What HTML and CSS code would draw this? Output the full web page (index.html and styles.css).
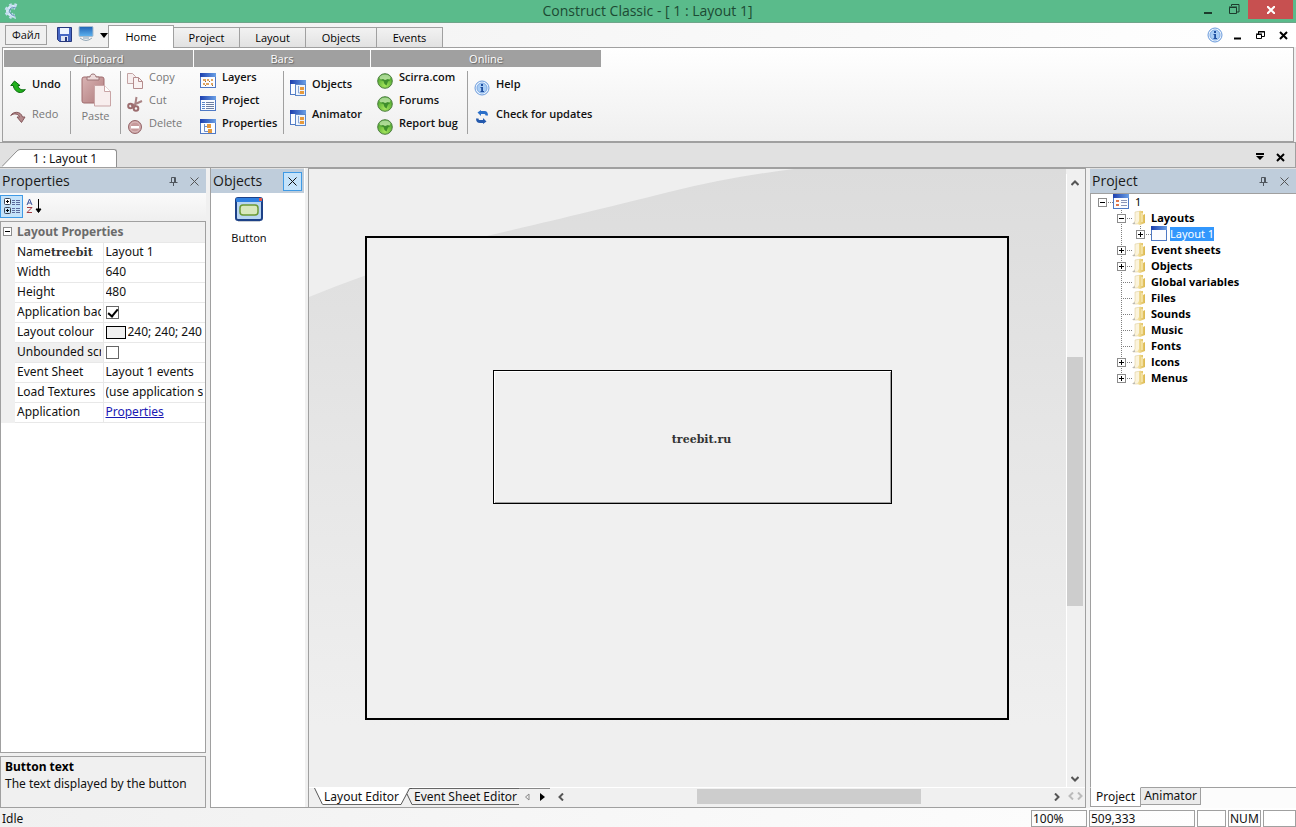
FILE: index.html
```html
<!DOCTYPE html>
<html lang="en">
<head>
    <meta charset="UTF-8">
    <meta name="viewport" content="width=device-width, initial-scale=1.0">
    <title>Construct Classic - [ 1 : Layout 1]</title>
    <link rel="stylesheet" href="styles.css">
</head>
<body>
    <svg class="defs" width="0" height="0" aria-hidden="true">
        <defs>
            <linearGradient id="gBlue" x1="0" y1="0" x2="1" y2="0">
                <stop offset="0" stop-color="#1c3fae"/><stop offset="1" stop-color="#6aa0e6"/>
            </linearGradient>
            <linearGradient id="gFolder" x1="0" y1="0" x2="1" y2="0">
                <stop offset="0" stop-color="#f8e9b0"/><stop offset="1" stop-color="#dcb84e"/>
            </linearGradient>
            <linearGradient id="gPink" x1="0" y1="0" x2="1" y2="1">
                <stop offset="0" stop-color="#d9b4b4"/><stop offset="1" stop-color="#b07a7c"/>
            </linearGradient>
            <radialGradient id="gGlobe" cx="0.5" cy="0.8" r="0.8">
                <stop offset="0" stop-color="#a5e45c"/><stop offset="1" stop-color="#3d9c26"/>
            </radialGradient>
            <linearGradient id="gScreen" x1="0" y1="0" x2="0" y2="1">
                <stop offset="0" stop-color="#1f62b5"/><stop offset="1" stop-color="#5fb4f0"/>
            </linearGradient>
        </defs>
        <symbol id="win" viewBox="0 0 16 16">
            <rect x="0.5" y="0.5" width="15" height="14" fill="#fbfcff" stroke="#4f79c4"/>
            <rect x="0" y="0" width="16" height="4" fill="url(#gBlue)"/>
        </symbol>
        <symbol id="layers" viewBox="0 0 16 16">
            <use href="#win"/>
            <path d="M3 6h3v2H3zM7 6h2v2H7zM11 6h2v2h-2zM3 10h2v2H3zM6 10h3v2H6zM11 10h2v2h-2z" fill="#e2a660"/>
            <path d="M5 8h1v1H5zM9 8h1v1H9zM5 12h1v1H5zM12 12h1v1h-1z" fill="#8a6a48"/>
        </symbol>
        <symbol id="list" viewBox="0 0 16 16">
            <use href="#win"/>
            <path d="M2 6h3v1H2zM2 8h3v1H2zM2 10h3v1H2zM2 12h3v1H2z" fill="#5c86c9"/>
            <path d="M6 6h8v1H6zM6 8h8v1H6zM6 10h8v1H6zM6 12h8v1H6z" fill="#6d7fa3"/>
        </symbol>
        <symbol id="props" viewBox="0 0 16 16">
            <use href="#win"/>
            <path d="M4.500 5v7.500h4M4.500 7.500h3" fill="none" stroke="#6f8fc8"/>
            <path d="M7 5h4v4H7zM8 10h4v4H8z" fill="#e79a3c"/>
        </symbol>
        <symbol id="objs" viewBox="0 0 16 16">
            <use href="#win"/>
            <rect x="5.500" y="4.500" width="10" height="11" fill="#eef4fc" stroke="#5b86c8"/>
            <path d="M8.500 6v7h3" fill="none" stroke="#8aa6d4"/>
            <path d="M10 7h4v3h-4zM10 11h4v3h-4z" fill="#e79a3c"/>
        </symbol>
        <symbol id="undo" viewBox="0 0 16 14">
            <path d="M4.500 1L0.800 5.500h2.500c0.500 4 3.500 7 7 7 2 0 4-1.200 5-3-3 1-6.800 0-7.300-4H10z" fill="#22b21c" stroke="#0c6c10"/>
        </symbol>
        <symbol id="redo" viewBox="0 0 16 14">
            <path d="M0.700 5.500C3 1.500 10.500 0.500 12.500 7H15l-3.500 5.500L7 7h2.500C8.500 3.500 4 3 0.700 5.500z" fill="#b58a8c" stroke="#85595c"/>
        </symbol>
        <symbol id="paste" viewBox="0 0 30 34">
            <rect x="1" y="4" width="22" height="26" rx="2" fill="url(#gPink)" stroke="#a06c6f"/>
            <path d="M6 7V4h3c0-4 6-4 6 0h3v3z" fill="#eedcdc" stroke="#9c7577"/>
            <path d="M13.500 12.500h10l6 6v14.500h-16z" fill="#f8eeee" stroke="#c9a5a6"/>
            <path d="M23.500 12.500v6h6" fill="#fff" stroke="#c9a5a6"/>
        </symbol>
        <symbol id="copy" viewBox="0 0 16 16">
            <path d="M0.500 0.500h5l3 3v7h-8z" fill="#f7eeee" stroke="#c3a3a3"/>
            <path d="M6.500 4.500h5l4 4v7h-9z" fill="#faf3f3" stroke="#b58c8d"/>
            <path d="M11.500 4.500v4h4" fill="none" stroke="#b58c8d"/>
        </symbol>
        <symbol id="cut" viewBox="0 0 16 16">
            <path d="M9.500 1L8 10M15 5L4 10" stroke="#a98384" stroke-width="2" fill="none"/>
            <circle cx="3.500" cy="10" r="2.300" fill="none" stroke="#9c6c6e" stroke-width="2"/>
            <circle cx="9" cy="12.500" r="2.300" fill="none" stroke="#9c6c6e" stroke-width="2"/>
        </symbol>
        <symbol id="del" viewBox="0 0 16 16">
            <circle cx="8" cy="8" r="6.500" fill="#c79a9b" stroke="#96686b"/>
            <circle cx="8" cy="8" r="5" fill="none" stroke="#dcbfc0"/>
            <rect x="4" y="7" width="8" height="2.500" fill="#fff"/>
        </symbol>
        <symbol id="globe" viewBox="0 0 16 16">
            <circle cx="8" cy="8" r="7.300" fill="url(#gGlobe)" stroke="#4d7d40"/>
            <ellipse cx="8" cy="4.500" rx="5.500" ry="3" fill="#d5f0c4" opacity="0.650"/>
            <path d="M3 7l3-1 2 1 3-1 2 1.500-2 1-1.500 4-2-1.500-1-3z" fill="#3f8e2c"/>
        </symbol>
        <symbol id="info" viewBox="0 0 16 16">
            <circle cx="8" cy="8" r="7" fill="#eaf3fd" stroke="#6b9bdc"/>
            <circle cx="8" cy="8" r="5" fill="#a9cdf4" stroke="#7eaae4"/>
            <path d="M7 4h2v2H7zM6.500 7H9v4h1v1H6.500v-1h0.700V8H6.500z" fill="#1f4fa0"/>
        </symbol>
        <symbol id="update" viewBox="0 0 14 14">
            <path d="M6 1h3.500C12 1 13 3 13 5.500h-2.500C10.500 4.500 10 4 9 4H6v2L2.500 2.500 6 0z" fill="#2b6fc9"/>
            <path d="M8 13H5C2.500 13 1 11.500 1 8.500h2.500C3.500 9.500 4 10 5 10h3V8l3.500 3.500L8 14z" fill="#2459ad"/>
        </symbol>
        <symbol id="pin" viewBox="0 0 9 9">
            <path d="M2.500 5V0.500h4V5M5.500 1v4M0.500 5.500h8M4.500 6v3" fill="none" stroke="#50575e"/>
        </symbol>
        <symbol id="x" viewBox="0 0 9 9">
            <path d="M0.500 0.500l8 8M8.500 0.500l-8 8" fill="none" stroke="currentColor"/>
        </symbol>
        <symbol id="folder" viewBox="0 0 16 16">
            <path d="M3 2l6-1v11l-4 2H1l2-3z" fill="#fbf4dc" stroke="#d8c68c" stroke-width="0.500"/>
            <path d="M7 1l4 0v4l2-1v9l-5 2-3-1 2-3z" fill="url(#gFolder)"/>
            <path d="M10 3v9" stroke="#fff6cf" fill="none"/>
            <path d="M0 14l3-2v2z" fill="#b9b9b9"/>
        </symbol>
        <symbol id="app" viewBox="0 0 16 16">
            <use href="#win"/>
            <path d="M3 6h3v2H3zM3 10h3v2H3z" fill="#e0764a"/>
            <path d="M8 6h6v1H8zM8 8h6v1H8zM8 11h6v1H8z" fill="#8a95b8"/>
        </symbol>
    </svg>

    <header class="titlebar">
        <svg class="logo" width="14" height="16" viewBox="0 0 14 16"><path d="M12 4Q8 2 5 5t0 6q3 3 6 2" fill="none" stroke="#d6eaf6" stroke-width="3"/><path d="M12 4Q8 2 5 5t0 6q3 3 6 2" fill="none" stroke="#c4def0" stroke-width="6" stroke-dasharray="2 2"/><path d="M12 5Q8 3 6 6t1 5q2 2 4 2" fill="none" stroke="#6a93bd"/></svg>
        <h1>Construct Classic - [ 1 : Layout 1]</h1>
        <div class="window-buttons">
            <button aria-label="Minimize"><svg width="10" height="10"><path d="M1 8h8" stroke="#1c3b2c" stroke-width="2"/></svg></button>
            <button aria-label="Restore"><svg width="11" height="11"><path d="M0.500 3.500h7v6h-7zM2.500 2V0.500h7.500v7.500H8M0 3h8" fill="none" stroke="#1c3b2c"/></svg></button>
            <button class="close" aria-label="Close"><svg width="8" height="8"><path d="M0 0l8 8M8 0L0 8" stroke="#fff" stroke-width="2"/></svg></button>
        </div>
    </header>

    <nav class="tabs">
        <button class="file">Файл</button>
        <button class="quick" aria-label="Save"><svg width="15" height="15"><path d="M0.500 0.500h14v14h-12l-2-2z" fill="#4767c4" stroke="#26377c"/><rect x="3" y="1" width="9" height="6" fill="#eef3ff"/><rect x="4" y="9" width="7" height="5" fill="#dfe4f3"/><rect x="8" y="10" width="2" height="4" fill="#26377c"/></svg></button>
        <button class="quick" aria-label="Run"><svg width="16" height="16"><rect x="1" y="0.500" width="14" height="10" rx="1" fill="url(#gScreen)" stroke="#a9bccc"/><path d="M5 11h6v2H5z" fill="#b9c9d6"/><path d="M2 12q6 5 12 0" fill="none" stroke="#93a8b8"/></svg></button>
        <button class="drop" aria-label="More"><svg width="8" height="5"><path d="M0 0h8L4 5z"/></svg></button>
        <button class="tab active">Home</button>
        <button class="tab">Project</button>
        <button class="tab">Layout</button>
        <button class="tab wide">Objects</button>
        <button class="tab">Events</button>
        <div class="mdi">
            <button aria-label="About"><svg width="16" height="16"><use href="#info"/></svg></button>
            <button aria-label="Minimize document"><svg width="9" height="9"><path d="M1 7.500h7" stroke="#000" stroke-width="2"/></svg></button>
            <button aria-label="Restore document"><svg width="9" height="9"><path d="M0.500 3.500h5v4h-5zM2.500 3V0.500h6v5H6M0 3h6M2 1h7" fill="none" stroke="#000"/></svg></button>
            <button aria-label="Close document"><svg width="9" height="9"><path d="M1 1l7 7M8 1L1 8" stroke="#000" stroke-width="2"/></svg></button>
        </div>
    </nav>

    <section class="ribbon">
        <div class="group">
            <h2>Clipboard</h2>
            <div class="cols">
                <div class="col two undo-col">
                    <button><svg width="16" height="14"><use href="#undo"/></svg>Undo</button>
                    <button disabled><svg width="16" height="14"><use href="#redo"/></svg>Redo</button>
                </div>
                <div class="col paste-col">
                    <button class="big" disabled><svg width="30" height="34"><use href="#paste"/></svg>Paste</button>
                </div>
                <div class="col copy-col">
                    <button disabled><svg width="16" height="16"><use href="#copy"/></svg>Copy</button>
                    <button disabled><svg width="16" height="16"><use href="#cut"/></svg>Cut</button>
                    <button disabled><svg width="16" height="16"><use href="#del"/></svg>Delete</button>
                </div>
            </div>
        </div>
        <div class="group">
            <h2>Bars</h2>
            <div class="cols">
                <div class="col bars-col">
                    <button><svg width="16" height="16"><use href="#layers"/></svg>Layers</button>
                    <button><svg width="16" height="16"><use href="#list"/></svg>Project</button>
                    <button><svg width="16" height="16"><use href="#props"/></svg>Properties</button>
                </div>
                <div class="col two objects-col">
                    <button><svg width="16" height="16"><use href="#objs"/></svg>Objects</button>
                    <button><svg width="16" height="16"><use href="#objs"/></svg>Animator</button>
                </div>
            </div>
        </div>
        <div class="group">
            <h2>Online</h2>
            <div class="cols">
                <div class="col online-col">
                    <button><svg width="16" height="16"><use href="#globe"/></svg>Scirra.com</button>
                    <button><svg width="16" height="16"><use href="#globe"/></svg>Forums</button>
                    <button><svg width="16" height="16"><use href="#globe"/></svg>Report bug</button>
                </div>
                <div class="col two help-col">
                    <button><svg width="16" height="16"><use href="#info"/></svg>Help</button>
                    <button><svg width="16" height="14"><use href="#update"/></svg>Check for updates</button>
                </div>
            </div>
        </div>
    </section>

    <div class="doc-tabs">
        <svg class="slope" width="18" height="18"><path d="M0 18L14 3Q17 0.500 18 0.500V18z" fill="#fff"/><path d="M0 17.500L14 3Q16 0.500 18 0.500" fill="none" stroke="#909090"/></svg>
        <button class="doc-tab">1 : Layout 1</button>
        <div class="doc-actions">
            <button aria-label="Documents"><svg width="8" height="8"><path d="M0 0h8v2H0zM0 3h8L4 7z"/></svg></button>
            <button aria-label="Close tab"><svg width="9" height="9"><path d="M1 1l7 7M8 1L1 8" stroke="#000" stroke-width="2"/></svg></button>
        </div>
    </div>

    <main>
        <aside class="properties">
            <div class="panel-head">
                <h3>Properties</h3>
                <button aria-label="Pin"><svg width="9" height="9"><use href="#pin"/></svg></button>
                <button aria-label="Close"><svg width="9" height="9"><use href="#x"/></svg></button>
            </div>
            <div class="prop-tools">
                <button class="on" aria-label="Categorized"><svg width="18" height="17"><rect x="1.500" y="0.500" width="6" height="6" rx="1" fill="#fff" stroke="#3d4757"/><path d="M3 3.500h3M4.500 2v3M3 12.500h3M4.500 11v3" stroke="#000"/><rect x="1.500" y="9.500" width="6" height="6" rx="1" fill="none" stroke="#3d4757"/><path d="M9 2.500h3M13 2.500h4M9 4.500h3M13 4.500h4M9 6.500h3M13 6.500h4M9 10.500h3M13 10.500h4M9 12.500h3M13 12.500h4M9 14.500h3M13 14.500h4" stroke="#5c6a9c"/></svg></button>
                <button aria-label="Sort alphabetically"><svg width="16" height="16"><path d="M1 7l2.500-6L6 7M2 5h3" fill="none" stroke="#3c549b"/><path d="M1 9.500h5L1 14.500h5" fill="none" stroke="#a03a42"/><path d="M12.500 1v13M10 11l2.500 3.500L15 11z" stroke="#000"/></svg></button>
            </div>
            <div class="prop-grid">
                <table>
                    <colgroup><col class="c-gutter"><col class="c-name"><col></colgroup>
                    <thead>
                        <tr><th class="gutter"><button class="toggle" aria-label="Collapse"><svg width="9" height="9"><path d="M2 4.500h5" stroke="#000"/></svg></button></th><th colspan="2">Layout Properties</th></tr>
                    </thead>
                    <tbody>
                        <tr><td class="gutter"></td><th><label for="p-name">Name <span class="mark">treebit</span></label></th><td><input id="p-name" type="text" value="Layout 1"></td></tr>
                        <tr><td class="gutter"></td><th><label for="p-width">Width</label></th><td><input id="p-width" type="text" value="640"></td></tr>
                        <tr><td class="gutter"></td><th><label for="p-height">Height</label></th><td><input id="p-height" type="text" value="480"></td></tr>
                        <tr><td class="gutter"></td><th><label for="p-back">Application background</label></th><td><input id="p-back" type="checkbox" checked></td></tr>
                        <tr><td class="gutter"></td><th><label for="p-colour">Layout colour</label></th><td><div class="colour"><span class="swatch"></span><input id="p-colour" type="text" value="240; 240; 240"></div></td></tr>
                        <tr class="shade"><td class="gutter"></td><th><label for="p-scroll">Unbounded scrolling</label></th><td><input id="p-scroll" type="checkbox"></td></tr>
                        <tr><td class="gutter"></td><th><label for="p-sheet">Event Sheet</label></th><td><select id="p-sheet"><option>Layout 1 events</option></select></td></tr>
                        <tr><td class="gutter"></td><th><label for="p-tex">Load Textures</label></th><td><select id="p-tex"><option>(use application setting)</option></select></td></tr>
                        <tr><td class="gutter"></td><th>Application</th><td><a href="#">Properties</a></td></tr>
                    </tbody>
                </table>
            </div>
            <div class="prop-help">
                <strong>Button text</strong>
                <p>The text displayed by the button</p>
            </div>
        </aside>

        <aside class="objects">
            <div class="panel-head">
                <h3>Objects</h3>
                <button class="hot" aria-label="Close"><svg width="9" height="9"><use href="#x"/></svg></button>
            </div>
            <button class="object">
                <svg width="28" height="26"><rect x="1" y="1" width="26" height="22" rx="2" fill="#b9d6f2" stroke="#1d4187" stroke-width="2"/><rect x="1" y="1" width="26" height="4" rx="1" fill="#2f7fe0"/><rect x="24" y="1" width="3" height="3" fill="#e0594a"/><rect x="5" y="8" width="18" height="10" rx="3" fill="#d9e8bd" stroke="#6c9a35" stroke-width="1.500"/><path d="M3 24.500h22" stroke="#c9ced6"/></svg>
                Button
            </button>
        </aside>

        <section class="editor">
            <div class="canvas">
                <svg class="backdrop" width="100%" height="100%"><path d="M0 0H485Q420 8 360 23C280 43 220 57 170 69C100 90 50 108 0 128z" fill="#efefef"/></svg>
                <div class="layout-frame">
                    <button class="layout-button">treebit.ru</button>
                </div>
            </div>
            <div class="vscroll">
                <button aria-label="Scroll up"><svg width="8" height="6"><path d="M0.500 5L4 1.500 7.500 5" fill="none" stroke="#555" stroke-width="2"/></svg></button>
                <div class="track"><div class="thumb"></div></div>
                <button aria-label="Scroll down"><svg width="8" height="6"><path d="M0.500 1L4 4.500 7.500 1" fill="none" stroke="#555" stroke-width="2"/></svg></button>
            </div>
            <div class="bottom">
                <div class="sheet-tabs">
                    <svg width="9" height="17"><path d="M0 0h9v16H8z" fill="#fff"/><path d="M0.500 0L8.500 16.500" stroke="#555"/></svg>
                    <button class="sheet current">Layout Editor</button>
                    <svg width="12" height="17"><path d="M0 0h8L2 16H0z" fill="#fff"/><path d="M1 16.500L9.500 0.500H12M7 6l5 10.500M0 16.500h1" fill="none" stroke="#555"/></svg>
                    <button class="sheet">Event Sheet Editor</button>
                    <button class="step" aria-label="Previous"><svg width="6" height="8"><path d="M5 1v6L1.500 4z" fill="none" stroke="#888"/></svg></button>
                    <button class="step" aria-label="Next"><svg width="5" height="8"><path d="M0 0l5 4-5 4z"/></svg></button>
                </div>
                <div class="hscroll">
                    <button aria-label="Scroll left"><svg width="6" height="8"><path d="M5 0.500L1.500 4 5 7.500" fill="none" stroke="#555" stroke-width="2"/></svg></button>
                    <div class="track"><div class="thumb"></div></div>
                    <button aria-label="Scroll right"><svg width="6" height="8"><path d="M1 0.500L4.500 4 1 7.500" fill="none" stroke="#555" stroke-width="2"/></svg></button>
                </div>
                <svg class="corner" width="15" height="8"><path d="M5 0.500L1.500 4 5 7.500M10 0.500L13.500 4 10 7.500" fill="none" stroke="#bbb" stroke-width="2"/></svg>
            </div>
        </section>

        <aside class="project">
            <div class="panel-head">
                <h3>Project</h3>
                <button aria-label="Pin"><svg width="9" height="9"><use href="#pin"/></svg></button>
                <button aria-label="Close"><svg width="9" height="9"><use href="#x"/></svg></button>
            </div>
            <div class="tree">
                <div class="node root"><button class="toggle" aria-label="Collapse"><svg width="9" height="9"><path d="M2 4.500h5" stroke="#000"/></svg></button><i class="dots"></i><svg width="16" height="16"><use href="#app"/></svg><span>1</span></div>
                <ul>
                    <li>
                        <div class="node"><button class="toggle" aria-label="Collapse"><svg width="9" height="9"><path d="M2 4.500h5" stroke="#000"/></svg></button><i class="dots"></i><svg width="16" height="16"><use href="#folder"/></svg><span>Layouts</span></div>
                        <ul>
                            <li><div class="node plain"><button class="toggle" aria-label="Expand"><svg width="9" height="9"><path d="M2 4.500h5M4.500 2v5" stroke="#000"/></svg></button><i class="dots"></i><svg width="16" height="16"><use href="#win"/></svg><span class="selected">Layout 1</span></div></li>
                        </ul>
                    </li>
                    <li><div class="node"><button class="toggle" aria-label="Expand"><svg width="9" height="9"><path d="M2 4.500h5M4.500 2v5" stroke="#000"/></svg></button><i class="dots"></i><svg width="16" height="16"><use href="#folder"/></svg><span>Event sheets</span></div></li>
                    <li><div class="node"><button class="toggle" aria-label="Expand"><svg width="9" height="9"><path d="M2 4.500h5M4.500 2v5" stroke="#000"/></svg></button><i class="dots"></i><svg width="16" height="16"><use href="#folder"/></svg><span>Objects</span></div></li>
                    <li><div class="node leaf"><i class="dots"></i><svg width="16" height="16"><use href="#folder"/></svg><span>Global variables</span></div></li>
                    <li><div class="node leaf"><i class="dots"></i><svg width="16" height="16"><use href="#folder"/></svg><span>Files</span></div></li>
                    <li><div class="node leaf"><i class="dots"></i><svg width="16" height="16"><use href="#folder"/></svg><span>Sounds</span></div></li>
                    <li><div class="node leaf"><i class="dots"></i><svg width="16" height="16"><use href="#folder"/></svg><span>Music</span></div></li>
                    <li><div class="node leaf"><i class="dots"></i><svg width="16" height="16"><use href="#folder"/></svg><span>Fonts</span></div></li>
                    <li><div class="node"><button class="toggle" aria-label="Expand"><svg width="9" height="9"><path d="M2 4.500h5M4.500 2v5" stroke="#000"/></svg></button><i class="dots"></i><svg width="16" height="16"><use href="#folder"/></svg><span>Icons</span></div></li>
                    <li><div class="node"><button class="toggle" aria-label="Expand"><svg width="9" height="9"><path d="M2 4.500h5M4.500 2v5" stroke="#000"/></svg></button><i class="dots"></i><svg width="16" height="16"><use href="#folder"/></svg><span>Menus</span></div></li>
                </ul>
            </div>
            <div class="panel-tabs">
                <button class="current">Project</button>
                <button>Animator</button>
            </div>
        </aside>
    </main>

    <footer>
        <span class="idle">Idle</span>
        <span class="cell zoom">100%</span>
        <span class="cell pos">509,333</span>
        <span class="cell small"></span>
        <span class="cell key">NUM</span>
        <span class="cell key"></span>
    </footer>
</body>
</html>
```
FILE: styles.css
```css
* {
    box-sizing: border-box;
}

body {
    margin: 0;
    height: 100vh;
    display: flex;
    flex-direction: column;
    overflow: hidden;
    background: #f0f0f0;
    color: #111;
    font-family: "Noto Sans", Tahoma, sans-serif;
    font-size: 12px;
    line-height: 16px;
}

h1, h2, h3, p, ul {
    margin: 0;
    padding: 0;
    font-weight: normal;
}

button, input, select {
    margin: 0;
    padding: 0;
    border: none;
    border-radius: 0;
    background: none;
    color: inherit;
    font: inherit;
}

svg {
    flex: none;
    display: block;
}

.defs {
    position: absolute;
}

/* title bar */
.titlebar {
    flex: none;
    display: flex;
    align-items: center;
    height: 23px;
    background: #5abb8b;
    border-bottom: 1px solid #6fa58a;
}

.logo {
    margin-left: 4px;
}

.titlebar h1 {
    flex: 1;
    padding-left: 82px;
    text-align: center;
    font-family: "Open Sans", sans-serif;
    font-size: 14px;
    line-height: 22px;
    color: #1c4a33;
}

.window-buttons {
    display: flex;
    align-self: flex-start;
}

.window-buttons button {
    width: 26px;
    height: 19px;
    display: flex;
    align-items: center;
    justify-content: center;
}

.window-buttons .close {
    width: 45px;
    margin: 0 3px 0 1px;
    background: #c75050;
}

/* ribbon tabs */
.tabs {
    flex: none;
    display: flex;
    align-items: flex-end;
    height: 24px;
    padding-left: 5px;
    background: linear-gradient(90deg, #f0f0f0, #fff);
    font-family: "Open Sans", sans-serif;
    font-weight: 500;
}

.file {
    align-self: flex-start;
    width: 42px;
    height: 20px;
    margin: 2px 10px 0 0;
    border: 1px solid #a0a0a0;
    background: #f0f0f0;
    font-size: 11px;
}

.quick {
    height: 22px;
    margin-right: 6px;
    padding-bottom: 4px;
}

.drop {
    height: 14px;
    align-self: center;
}

.tab {
    width: 66px;
    height: 20px;
    border: 1px solid #a0a0a0;
    border-width: 1px 1px 0 0;
    background: linear-gradient(#f2f2f2, #e2e2e2);
    font-size: 11px;
    line-height: 18px;
    color: #000;
}

.tab.wide {
    width: 71px;
}

.tab.active {
    position: relative;
    height: 23px;
    margin-bottom: -1px;
    border-left-width: 1px;
    background: #fff;
}

.mdi {
    display: flex;
    align-items: center;
    align-self: center;
    gap: 14px;
    margin-left: auto;
    padding-right: 8px;
}

.mdi button:first-child {
    margin-right: -4px;
}

/* ribbon */
.ribbon {
    flex: none;
    display: flex;
    height: 95px;
    margin: 0 2px;
    padding: 2px 1px 0;
    gap: 1px;
    border: 1px solid #a0a0a0;
    background: linear-gradient(#fff, #fafafa 30%, #efefef);
    font-family: "Open Sans", sans-serif;
}

.group h2 {
    height: 17px;
    background: #a0a0a0;
    color: #fff;
    text-align: center;
    font-size: 11px;
    line-height: 17px;
    text-shadow: 1px 1px 1px #666;
}

.cols {
    display: flex;
    padding-top: 4px;
}

.col {
    display: flex;
    flex-direction: column;
    height: 63px;
    padding-left: 6px;
}

.col + .col {
    border-left: 1px solid #a0a0a0;
}

.col.two {
    padding-top: 2px;
}

.col button {
    flex: none;
    display: flex;
    align-items: flex-start;
    gap: 6px;
    height: 23px;
    margin-top: -2px;
    margin-bottom: 2px;
    font-size: 11px;
    font-weight: 600;
    line-height: 16px;
    white-space: nowrap;
}

.col button svg {
    margin-top: 4px;
}

.col.two button {
    height: 30px;
    margin: 0;
    padding-top: 3px;
}

.col button:disabled {
    color: #777;
    font-weight: 500;
}

.col .big {
    flex-direction: column;
    align-items: center;
    gap: 1px;
    height: auto;
}

.undo-col {
    width: 66px;
}

.paste-col {
    width: 50px;
    padding: 0;
    align-items: center;
}

.copy-col {
    width: 73px;
}

.bars-col {
    width: 89px;
}

.objects-col {
    width: 87px;
}

.online-col {
    width: 96px;
}

.help-col {
    width: 134px;
}

/* document tabs */
.doc-tabs {
    flex: none;
    display: flex;
    align-items: flex-end;
    height: 26px;
    padding: 0 10px 0 2px;
    border: 1px solid #a0a0a0;
    border-left: none;
    background: #e1e1e1;
}

.doc-tab {
    width: 97px;
    height: 18px;
    padding-right: 6px;
    border: 1px solid #909090;
    border-width: 1px 1px 0 0;
    border-radius: 0 3px 0 0;
    background: #fff;
}

.doc-actions {
    display: flex;
    align-items: center;
    gap: 12px;
    height: 20px;
    margin-left: auto;
}

/* work area */
main {
    flex: 1;
    display: flex;
    min-height: 0;
}

.panel-head {
    flex: none;
    display: flex;
    align-items: center;
    height: 25px;
    padding: 0 7px 0 2px;
    gap: 12px;
    border-top: 1px solid #e1e1e1;
    background: #bfcddb;
    color: #1a1a1a;
}

.panel-head h3 {
    flex: 1;
    font-family: "Open Sans", sans-serif;
    font-size: 14px;
    line-height: 24px;
}

.panel-head button {
    color: #555;
}

.panel-head .hot {
    display: flex;
    align-items: center;
    justify-content: center;
    width: 19px;
    height: 19px;
    margin-right: -5px;
    border: 1px solid #3f9ae5;
    background: #c5e3fa;
    color: #111;
}

.properties {
    flex: none;
    display: flex;
    flex-direction: column;
    width: 206px;
}

.prop-tools {
    flex: none;
    display: flex;
    align-items: center;
    height: 28px;
    gap: 3px;
    padding-bottom: 2px;
    background: linear-gradient(#fafafa, #efefef);
}

.prop-tools .on {
    width: 23px;
    height: 23px;
    padding-left: 2px;
    border: 1px solid #3f9ae5;
    background: #c5e3fa;
}

.prop-grid {
    flex: 1;
    overflow: hidden;
    border: 1px solid #a0a0a0;
    background: #fff;
}

table {
    width: 100%;
    table-layout: fixed;
    border-collapse: collapse;
}

.c-gutter {
    width: 14px;
}

.c-name {
    width: 88px;
}

th, td {
    height: 20px;
    padding: 0 2px;
    border-bottom: 1px solid #e8e8e8;
    overflow: hidden;
    text-align: left;
    font-weight: normal;
    line-height: 18px;
    white-space: nowrap;
}

thead th {
    background: #f0f0f0;
    color: #6b6b6b;
    font-weight: bold;
}

.gutter {
    border-color: #f0f0f0;
    background: #f0f0f0;
}

tbody th {
    border-right: 1px solid #e8e8e8;
}

tbody th label {
    display: block;
    overflow: hidden;
}

tbody td input, tbody td select {
    display: block;
    width: 100%;
    height: 18px;
    appearance: none;
    outline: none;
}

.shade th {
    background: #f0f0f0;
}

.mark {
    margin-left: -3px;
    font-family: "DejaVu Serif", serif;
    font-size: 11px;
    line-height: 16px;
    font-weight: bold;
    color: #333;
}

tbody td input[type="checkbox"] {
    width: 13px;
    height: 13px;
    border: 1px solid #666;
    background: #fff;
}

input[type="checkbox"]:checked::before {
    content: "";
    display: block;
    width: 4px;
    height: 8px;
    margin: 0 0 0 3px;
    border: solid #000;
    border-width: 0 2px 2px 0;
    transform: rotate(40deg);
}

.colour {
    display: flex;
    align-items: center;
    gap: 2px;
}

.swatch {
    flex: none;
    width: 20px;
    height: 13px;
    border: 1px solid #000;
    background: #f0f0f0;
}

.colour input {
    flex: 1;
    min-width: 0;
}

td a {
    color: #1a1ab4;
}

.toggle {
    flex: none;
    width: 9px;
    height: 9px;
    border: 1px solid #8c8c8c;
    background: #fff;
    overflow: hidden;
    display: flex;
    align-items: center;
    justify-content: center;
}

.prop-help {
    flex: none;
    height: 52px;
    margin-top: 3px;
    padding: 1px 4px;
    border: 1px solid #a0a0a0;
    line-height: 17px;
}

.prop-help strong {
    color: #000;
}

/* objects panel */
.objects {
    flex: none;
    width: 98px;
    margin-left: 4px;
    padding-right: 4px;
    border-left: 1px solid #a0a0a0;
    border-bottom: 1px solid #a0a0a0;
    background: linear-gradient(90deg, #fff 94px, #f0f0f0 94px);
}

.object {
    display: flex;
    flex-direction: column;
    align-items: center;
    gap: 7px;
    width: 76px;
    padding-top: 4px;
    line-height: 16px;
    font-size: 11px;
}

/* layout editor */
.editor {
    flex: 1;
    min-width: 0;
    display: grid;
    grid-template-columns: 1fr 19px;
    grid-template-rows: 1fr 20px;
    border: 1px solid #a0a0a0;
    background: #f0f0f0;
}

.canvas {
    position: relative;
    overflow: hidden;
    background: linear-gradient(#dcdcdc, #e6e6e6 45%, #efefef 90%);
}

.backdrop {
    position: absolute;
    left: 0;
    top: 0;
}

.layout-frame {
    position: absolute;
    left: 56px;
    top: 67px;
    width: 644px;
    height: 484px;
    border: 2px solid #000;
    background: #f0f0f0;
}

.layout-button {
    position: absolute;
    left: 126px;
    top: 132px;
    width: 399px;
    height: 134px;
    padding: 6px 0 0 18px;
    border: 1px solid #000;
    box-shadow: inset 1px 1px 0 #fff, inset -1px -1px 0 #a0a0a0;
    font-family: "DejaVu Serif", serif;
    font-size: 11px;
    font-weight: bold;
    color: #333;
}

.vscroll {
    display: flex;
    flex-direction: column;
    margin-top: 5px;
    border-left: 1px solid #fff;
    padding-right: 2px;
}

.vscroll button {
    display: flex;
    align-items: center;
    justify-content: center;
    height: 17px;
}

.vscroll .track {
    flex: 1;
    display: grid;
    grid-template-rows: 167fr 249fr 165fr;
}

.vscroll .thumb {
    grid-row: 2;
    background: #cdcdcd;
}

.bottom {
    grid-column: 1 / 3;
    display: flex;
    align-items: flex-start;
    padding: 0 2px 0 5px;
    border-top: 1px solid #fff;
}

.sheet-tabs {
    flex: none;
    display: flex;
    align-items: center;
}

.sheet {
    height: 17px;
    padding: 0 2px;
    border-top: 1px solid #666;
    border-bottom: 1px solid #666;
    line-height: 15px;
}

.sheet.current {
    padding: 0 1px;
    border-top-color: #fff;
    background: #fff;
}

.step {
    height: 17px;
    padding: 0 5px;
    border-top: 1px solid #888;
}

.hscroll {
    flex: 1;
    display: flex;
    align-items: center;
    height: 17px;
}

.hscroll button {
    padding: 0 8px;
}

.hscroll .track {
    flex: 1;
    display: grid;
    grid-template-columns: 127fr 226fr 127fr;
    height: 15px;
}

.hscroll .thumb {
    grid-column: 2;
    background: #cdcdcd;
}

.corner {
    margin-top: 4px;
}

/* project panel */
.project {
    flex: none;
    display: flex;
    flex-direction: column;
    width: 206px;
    margin-left: 4px;
}

.tree {
    flex: 1;
    padding-left: 7px;
    border: 1px solid #a0a0a0;
    border-width: 1px 0 0 1px;
    background: #fff;
    font-family: "Open Sans", sans-serif;
    font-size: 11px;
}

.tree ul {
    margin-left: 19px;
    list-style: none;
    background: repeating-linear-gradient(#808080 0 1px, transparent 1px 2px) 4px 0 / 1px calc(100% - 8px) no-repeat;
}

.node {
    display: flex;
    align-items: center;
    height: 16px;
    font-weight: bold;
    color: #000;
}

.root, .plain {
    font-family: "Noto Sans", sans-serif;
    font-weight: normal;
}

.dots {
    flex: none;
    width: 6px;
    height: 1px;
    background: repeating-linear-gradient(90deg, transparent 0 1px, #808080 1px 2px);
}

.leaf .dots {
    width: 10px;
    margin-left: 5px;
}

.node span {
    margin-left: 3px;
    line-height: 14px;
}

.root span {
    margin-left: 6px;
}

.node .selected {
    background: #3297fd;
    color: #fff;
}

.panel-tabs {
    flex: none;
    display: flex;
    align-items: flex-start;
    height: 21px;
    background: linear-gradient(#a0a0a0 0 1px, #fcfcfc 1px);
}

.panel-tabs button {
    height: 18px;
    padding: 0 3px;
    border: 1px solid #a0a0a0;
    border-left: none;
    background: #ebebeb;
    line-height: 16px;
}

.panel-tabs .current {
    height: 20px;
    padding: 0 5px;
    border-left: 1px solid #a0a0a0;
    border-top-color: #fff;
    background: #fff;
}

/* status bar */
footer {
    flex: none;
    display: flex;
    align-items: flex-end;
    gap: 2px;
    height: 19px;
    padding-left: 2px;
    background: linear-gradient(90deg, #f0f0f0, #fff);
}

.idle {
    flex: 1;
}

.cell {
    height: 17px;
    padding-left: 1px;
    border: 1px solid #a0a0a0;
    line-height: 16px;
}

.zoom {
    width: 56px;
}

.pos {
    width: 106px;
}

.small {
    width: 29px;
}

.key {
    width: 33px;
}
```
